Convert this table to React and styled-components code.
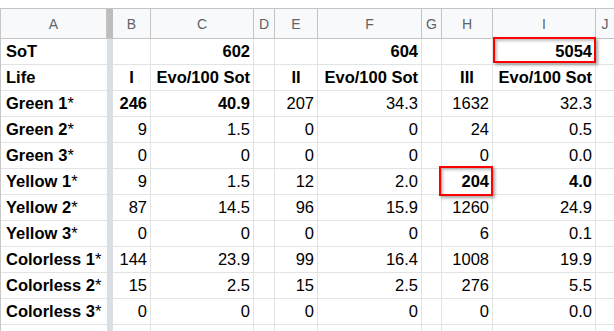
import styled, { createGlobalStyle } from 'styled-components';

const GlobalStyle = createGlobalStyle`
  html, body {
    margin: 0;
    padding: 0;
    background: #fff;
    overflow: hidden;
  }
  body {
    font-family: 'Liberation Sans', Arial, sans-serif;
  }
`;

const COLUMNS = ['A', null, 'B', 'C', 'D', 'E', 'F', 'G', 'H', 'I', 'J'];

const Page = styled.div`
  width: 614px;
  height: 331px;
  padding-top: 8px;
  box-sizing: border-box;
  overflow: hidden;
`;

const Sheet = styled.div`
  display: grid;
  grid-template-columns: 106px 6px 38px 103px 21px 43px 104px 20px 51px 103px 1fr;
  grid-template-rows: 31px;
  grid-auto-rows: 26px;
  border-left: 1px solid #c7c7c7;
`;

const HeaderCell = styled.div`
  display: flex;
  align-items: center;
  justify-content: center;
  box-sizing: border-box;
  background: #f8f9fa;
  border-top: 1px solid #c4c4c4;
  border-bottom: 1px solid #c4c4c4;
  border-right: ${(p) => (p.$last ? 'none' : '1px solid #c4c4c4')};
  color: #5f6368;
  font-size: 14px;
`;

const Freeze = styled.div`
  box-sizing: border-box;
  background: ${(p) => (p.$head ? '#bdbdbd' : '#dadee5')};
  border-top: ${(p) => (p.$head ? '1px solid #c4c4c4' : 'none')};
  border-bottom: ${(p) => (p.$head ? '1px solid #c4c4c4' : 'none')};
`;

const Cell = styled.div`
  position: relative;
  box-sizing: border-box;
  border-bottom: 1px solid #e2e3e3;
  border-right: ${(p) => (p.$noRight ? 'none' : '1px solid #e2e3e3')};
  padding: 0 3px 0 ${(p) => (p.$label ? '5px' : '3px')};
  line-height: 25px;
  font-size: 16.5px;
  color: #000;
  font-weight: ${(p) => (p.$bold ? 700 : 400)};
  text-align: ${(p) => p.$align || 'right'};
  white-space: nowrap;
  overflow: visible;
`;

const Star = styled.span`
  font-weight: 400;
`;

const Highlight = styled.div`
  position: absolute;
  top: ${(p) => p.$inset[0]}px;
  right: ${(p) => p.$inset[1]}px;
  bottom: ${(p) => p.$inset[2]}px;
  left: ${(p) => p.$inset[3]}px;
  border: 2.7px solid #ff0000;
  box-shadow: 2px 2px 3px rgba(0, 0, 0, 0.35), inset 2px 2px 3px rgba(0, 0, 0, 0.25);
  pointer-events: none;
  z-index: 2;
`;

const rows = [
  { label: 'Green 1', values: ['246', '40.9', '207', '34.3', '1632', '32.3'], bold: [0, 1] },
  { label: 'Green 2', values: ['9', '1.5', '0', '0', '24', '0.5'] },
  { label: 'Green 3', values: ['0', '0', '0', '0', '0', '0.0'] },
  { label: 'Yellow 1', values: ['9', '1.5', '12', '2.0', '204', '4.0'], bold: [4, 5], mark: 4 },
  { label: 'Yellow 2', values: ['87', '14.5', '96', '15.9', '1260', '24.9'] },
  { label: 'Yellow 3', values: ['0', '0', '0', '0', '6', '0.1'] },
  { label: 'Colorless 1', values: ['144', '23.9', '99', '16.4', '1008', '19.9'] },
  { label: 'Colorless 2', values: ['15', '2.5', '15', '2.5', '276', '5.5'] },
  { label: 'Colorless 3', values: ['0', '0', '0', '0', '0', '0.0'] },
];

// value index -> grid slot after the freeze bar (B C D E F G H I J)
const slots = [0, 1, 3, 4, 6, 7];

function DataRow({ label, values, bold = [], mark }) {
  const cells = Array(9).fill(null);
  values.forEach((v, i) => {
    cells[slots[i]] = { v, bold: bold.includes(i), mark: mark === i };
  });
  return (
    <>
      <Cell $label $bold $align="left" $noRight>
        {label}
        <Star>*</Star>
      </Cell>
      <Freeze />
      {cells.map((c, i) => (
        <Cell key={i} $bold={c && c.bold} $noRight={i === 8}>
          {c && c.v}
          {c && c.mark && <Highlight $inset={[-3, -1, -2, -3]} />}
        </Cell>
      ))}
    </>
  );
}

export default function App() {
  return (
    <Page>
      <GlobalStyle />
      <Sheet>
        {COLUMNS.map((c, i) =>
          c === null ? (
            <Freeze key={i} $head />
          ) : (
            <HeaderCell key={i} $last={c === 'J'}>
              {c}
            </HeaderCell>
          )
        )}

        <Cell $label $bold $align="left" $noRight>
          SoT
        </Cell>
        <Freeze />
        <Cell />
        <Cell $bold>602</Cell>
        <Cell />
        <Cell />
        <Cell $bold>604</Cell>
        <Cell />
        <Cell />
        <Cell $bold>
          5054
          <Highlight $inset={[-2, -1, 1, 0]} />
        </Cell>
        <Cell $noRight />

        <Cell $label $bold $align="left" $noRight>
          Life
        </Cell>
        <Freeze />
        <Cell $bold $align="center">I</Cell>
        <Cell $bold>Evo/100 Sot</Cell>
        <Cell />
        <Cell $bold $align="center">II</Cell>
        <Cell $bold>Evo/100 Sot</Cell>
        <Cell />
        <Cell $bold $align="center">III</Cell>
        <Cell $bold>Evo/100 Sot</Cell>
        <Cell $noRight />

        {rows.map((r) => (
          <DataRow key={r.label} {...r} />
        ))}

        <Cell $noRight />
        <Freeze />
        {Array.from({ length: 9 }, (_, i) => (
          <Cell key={i} $noRight={i === 8} />
        ))}
      </Sheet>
    </Page>
  );
}
